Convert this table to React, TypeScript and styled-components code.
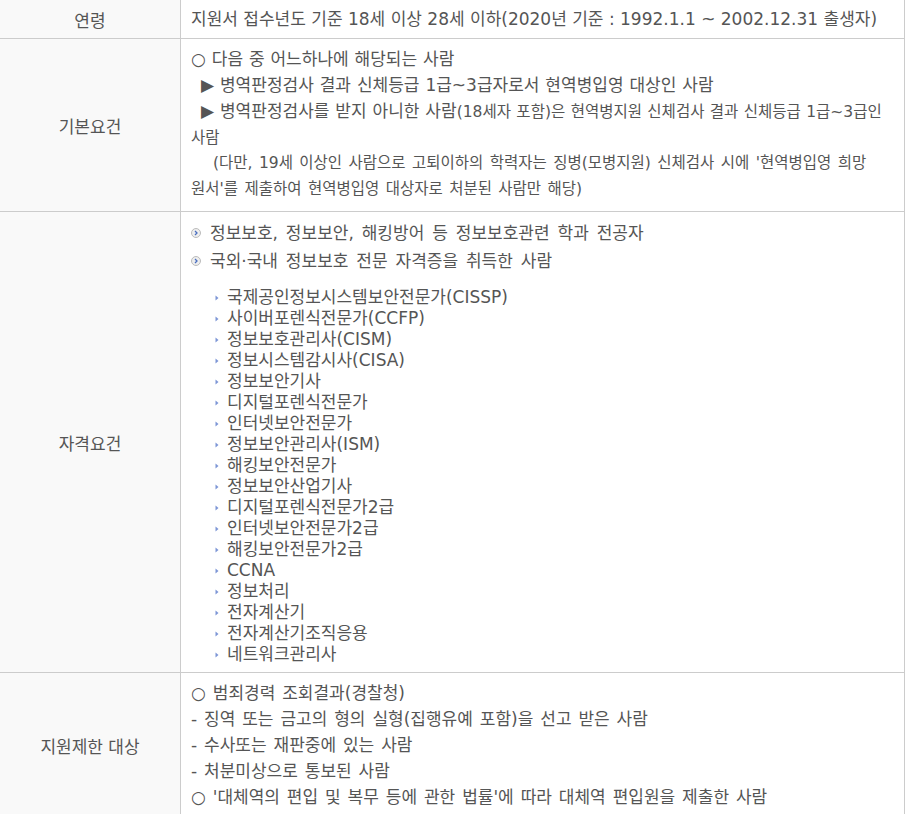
import styled, { createGlobalStyle } from "styled-components";

const GlobalStyle = createGlobalStyle`
  body {
    margin: 0;
    background: #fff;
    font-family: "DejaVu Sans", "Noto Sans CJK KR", sans-serif;
    color: #555;
  }
`;

const Table = styled.table`
  width: 905px;
  border-collapse: collapse;
  table-layout: fixed;
`;

const Label = styled.th`
  width: 180px;
  background: #f9f9f9;
  border-right: 1px solid #ccc;
  border-bottom: 1px solid #ccc;
  font-weight: normal;
  font-size: 17px;
  color: #555;
  text-align: center;
  vertical-align: middle;
  padding: 0;
`;

const Cell = styled.td<{ $pad?: string; $ws?: number }>`
  border-right: 1px solid #ccc;
  border-bottom: 1px solid #ccc;
  padding: ${(p) => p.$pad || "7px 10px 8px"};
  font-size: 17px;
  line-height: 26px;
  color: #555;
  vertical-align: top;
  word-spacing: ${(p) => (p.$ws ?? 1.5)}px;
  word-break: keep-all;
`;

const Line = styled.div<{ $indent?: number; $small?: boolean }>`
  text-indent: ${(p) => p.$indent || 0}px;
  ${(p) => p.$small && "font-size: 15.5px; word-spacing: 1.5px;"}
`;

const Small = styled.span`
  font-size: 15.5px;
  line-height: 1;
`;

const Keep = styled.span`
  white-space: nowrap;
`;

const DotList = styled.ul`
  list-style: none;
  margin: 0;
  padding: 0;
  word-spacing: 2.5px;
`;

const DotItem = styled.li`
  display: flex;
  align-items: center;
  gap: 9px;
  line-height: 28px;
`;

const SubList = styled.ul`
  list-style: none;
  margin: 12px 0 0;
  padding: 0 0 0 24px;
`;

const SubItem = styled.li`
  display: flex;
  align-items: center;
  gap: 8px;
  line-height: 21px;
`;

const CircleBullet = () => (
  <svg width="10" height="10" viewBox="0 0 10 10">
    <circle cx="5" cy="5" r="4.5" fill="#eee" stroke="#bbb" />
    <path d="M4 3 L6 5 L4 7" fill="none" stroke="#4a6fc0" strokeWidth="1.3" />
  </svg>
);

const ArrowBullet = () => (
  <svg width="4" height="6" viewBox="0 0 4 6">
    <path d="M0.5 0.5 L3.5 3 L0.5 5.5 Z" fill="#7d96d6" />
  </svg>
);

const certs = [
  "국제공인정보시스템보안전문가(CISSP)",
  "사이버포렌식전문가(CCFP)",
  "정보보호관리사(CISM)",
  "정보시스템감시사(CISA)",
  "정보보안기사",
  "디지털포렌식전문가",
  "인터넷보안전문가",
  "정보보안관리사(ISM)",
  "해킹보안전문가",
  "정보보안산업기사",
  "디지털포렌식전문가2급",
  "인터넷보안전문가2급",
  "해킹보안전문가2급",
  "CCNA",
  "정보처리",
  "전자계산기",
  "전자계산기조직응용",
  "네트워크관리사",
];

export default function App() {
  return (
    <>
      <GlobalStyle />
      <Table>
        <tbody>
          <tr>
            <Label>연령</Label>
            <Cell $pad="6px 10px 6px" $ws={0}>
              지원서 접수년도 기준 18세 이상 28세 이하(2020년 기준 : 1992.1.1 ~ 2002.12.31 출생자)
            </Cell>
          </tr>
          <tr>
            <Label>기본요건</Label>
            <Cell $pad="7px 10px 9px" $ws={0.5}>
              <Line>○ 다음 중 어느하나에 해당되는 사람</Line>
              <Line $indent={10}>
                ▶ 병역판정검사 결과 신체등급 <Keep>1급~3급자로서</Keep> 현역병입영 대상인 사람
              </Line>
              <Line $indent={10}>
                ▶ 병역판정검사를 받지 아니한 사람
                <Small>
                  (18세자 포함)은 현역병지원 신체검사 결과 신체등급 <Keep>1급~3급인</Keep> 사람
                </Small>
              </Line>
              <Line $indent={22} $small>
                (다만, 19세 이상인 사람으로 고퇴이하의 학력자는 징병(모병지원) 신체검사 시에 '현역병입영 희망 원서'를 제출하여 현역병입영 대상자로 처분된 사람만 해당)
              </Line>
            </Cell>
          </tr>
          <tr>
            <Label>자격요건</Label>
            <Cell $pad="7px 10px 7px" $ws={0.5}>
              <DotList>
                <DotItem>
                  <CircleBullet />
                  정보보호, 정보보안, 해킹방어 등 정보보호관련 학과 전공자
                </DotItem>
                <DotItem>
                  <CircleBullet />
                  국외·국내 정보보호 전문 자격증을 취득한 사람
                </DotItem>
              </DotList>
              <SubList>
                {certs.map((c) => (
                  <SubItem key={c}>
                    <ArrowBullet />
                    {c}
                  </SubItem>
                ))}
              </SubList>
            </Cell>
          </tr>
          <tr>
            <Label>지원제한 대상</Label>
            <Cell $pad="7px 10px 8px">
              <Line>○ 범죄경력 조회결과(경찰청)</Line>
              <Line>- 징역 또는 금고의 형의 실형(집행유예 포함)을 선고 받은 사람</Line>
              <Line>- 수사또는 재판중에 있는 사람</Line>
              <Line>- 처분미상으로 통보된 사람</Line>
              <Line>○ '대체역의 편입 및 복무 등에 관한 법률'에 따라 대체역 편입원을 제출한 사람</Line>
            </Cell>
          </tr>
        </tbody>
      </Table>
    </>
  );
}
